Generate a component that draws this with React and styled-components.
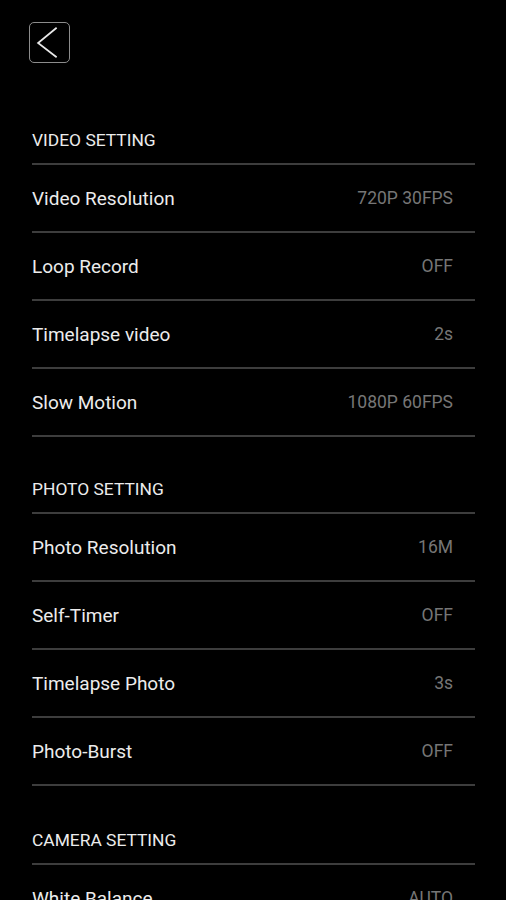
import React from "react";
import styled, { createGlobalStyle } from "styled-components";

const GlobalStyle = createGlobalStyle`
  html, body {
    margin: 0;
    padding: 0;
    background: #000;
    overflow: hidden;
  }
  body {
    font-family: Roboto, "Noto Sans", "Liberation Sans", sans-serif;
  }
`;

const Page = styled.div`
  width: 506px;
  height: 900px;
  background: #000;
  overflow: hidden;
`;

const TopBar = styled.div`
  height: 88px;
  padding: 22px 0 0 29px;
  box-sizing: border-box;
`;

const BackButton = styled.button`
  width: 41px;
  height: 41px;
  padding: 0;
  border: 1.5px solid #8c8c8c;
  border-radius: 5px;
  background: transparent;
  display: flex;
  align-items: center;
  justify-content: center;
  cursor: pointer;
`;

const List = styled.div`
  margin: 0 31px 0 32px;
`;

const SectionTitle = styled.div`
  height: ${(p) => p.$height || 77}px;
  box-sizing: border-box;
  display: flex;
  align-items: flex-end;
  padding-bottom: 12px;
  border-bottom: 2px solid #3d3d3d;
  color: #ececec;
  font-size: 17.4px;
  line-height: 22px;
`;

const Row = styled.div`
  height: 68px;
  box-sizing: border-box;
  display: flex;
  align-items: center;
  justify-content: space-between;
  padding-right: 22px;
  border-bottom: 2px solid #3d3d3d;
`;

const Label = styled.span`
  color: #ececec;
  font-size: 19px;
`;

const Value = styled.span`
  color: #767676;
  font-size: 17.5px;
`;

const sections = [
  {
    title: "VIDEO SETTING",
    rows: [
      ["Video Resolution", "720P 30FPS"],
      ["Loop Record", "OFF"],
      ["Timelapse video", "2s"],
      ["Slow Motion", "1080P 60FPS"],
    ],
  },
  {
    title: "PHOTO SETTING",
    rows: [
      ["Photo Resolution", "16M"],
      ["Self-Timer", "OFF"],
      ["Timelapse Photo", "3s"],
      ["Photo-Burst", "OFF"],
    ],
  },
  {
    title: "CAMERA SETTING",
    height: 79,
    rows: [["White Balance", "AUTO"]],
  },
];

export default function App() {
  return (
    <Page>
      <GlobalStyle />
      <TopBar>
        <BackButton aria-label="back">
          <svg width="41" height="41" viewBox="0 0 41 41">
            <polyline
              points="28,5 8.5,21 28,36"
              fill="none"
              stroke="#e8e8e8"
              strokeWidth="1.8"
            />
          </svg>
        </BackButton>
      </TopBar>
      <List>
        {sections.map((s) => (
          <React.Fragment key={s.title}>
            <SectionTitle $height={s.height}>{s.title}</SectionTitle>
            {s.rows.map(([label, value]) => (
              <Row key={label}>
                <Label>{label}</Label>
                <Value>{value}</Value>
              </Row>
            ))}
          </React.Fragment>
        ))}
      </List>
    </Page>
  );
}
